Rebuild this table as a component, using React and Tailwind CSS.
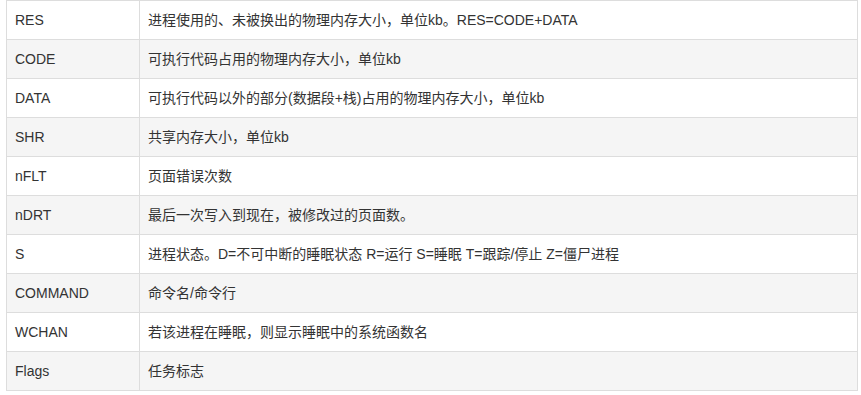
const rows = [
  ['RES', '进程使用的、未被换出的物理内存大小，单位kb。RES=CODE+DATA'],
  ['CODE', '可执行代码占用的物理内存大小，单位kb'],
  ['DATA', '可执行代码以外的部分(数据段+栈)占用的物理内存大小，单位kb'],
  ['SHR', '共享内存大小，单位kb'],
  ['nFLT', '页面错误次数'],
  ['nDRT', '最后一次写入到现在，被修改过的页面数。'],
  ['S', '进程状态。D=不可中断的睡眠状态 R=运行 S=睡眠 T=跟踪/停止 Z=僵尸进程'],
  ['COMMAND', '命令名/命令行'],
  ['WCHAN', '若该进程在睡眠，则显示睡眠中的系统函数名'],
  ['Flags', '任务标志'],
]

export default function App() {
  return (
    <div className="bg-white w-[861px] h-[395px] pl-[6px] font-['Liberation_Sans','Noto_Sans_CJK_SC',sans-serif] text-[14px] text-[#333]">
      <table className="w-[852px] border-collapse">
        <tbody>
          {rows.map(([k, v], i) => (
            <tr key={k} className={i % 2 ? 'bg-[#f5f5f5]' : 'bg-white'}>
              <td className="w-[133px] border border-[#ddd] px-[8px] py-[9px] leading-[20px]">{k}</td>
              <td className="border border-[#ddd] px-[8px] py-[9px] leading-[20px]">{v}</td>
            </tr>
          ))}
        </tbody>
      </table>
    </div>
  )
}
